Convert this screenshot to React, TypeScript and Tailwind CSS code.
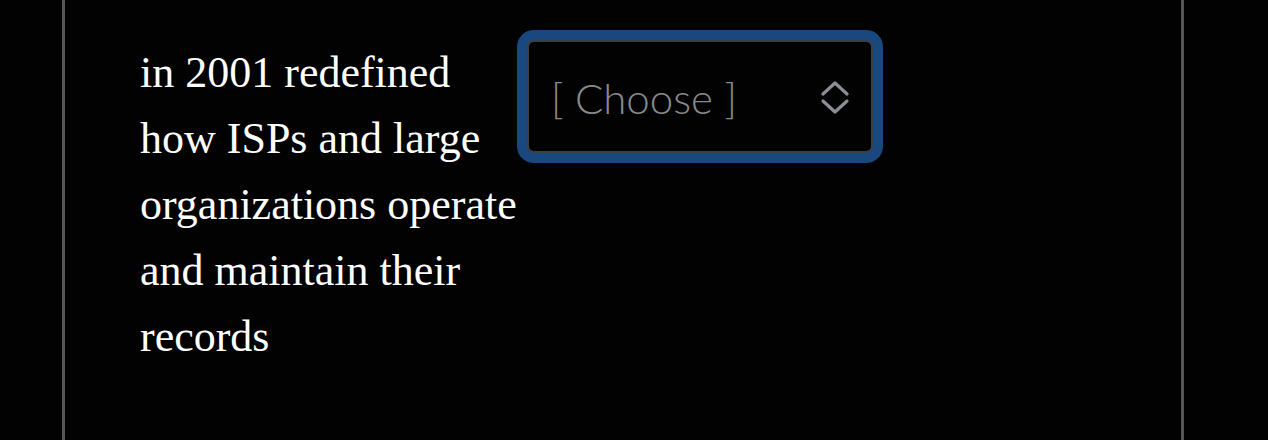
import { useState } from "react";

const options = ["[ Choose ]", "Registrar", "Registry", "Reseller"];

function ChevronsIcon() {
  return (
    <svg width="30" height="34" viewBox="0 0 30 34" fill="none" stroke="#8b8f95" strokeWidth="3.2" strokeLinecap="round" strokeLinejoin="round">
      <path d="M3 13 L15 2 L27 13" />
      <path d="M3 20 L15 31 L27 20" />
    </svg>
  );
}

export default function App() {
  const [value, setValue] = useState(options[0]);

  return (
    <div className="min-h-[440px] bg-[#020202] flex">
      <div className="ml-[62px] w-[1122px] border-x-[3px] border-[#555] min-h-[440px] pl-[75px] pt-[40px]">
        <div className="flex items-start gap-[7px]">
          <p className="w-[380px] text-white text-[44px] leading-[66px] font-['Liberation_Serif',serif]">
            in 2001 redefined how ISPs and large organizations operate and maintain their records
          </p>

          <label className="relative block w-[346px] h-[113px] rounded-[7px] border-2 border-[#3b3e43] bg-[#020202] shadow-[0_0_0_10px_#19487e]">
            <select
              className="appearance-none w-full h-full bg-transparent pl-[22px] pr-[60px] pt-[4px] text-[42px] font-light text-[#8a8a8a] outline-none font-['Lato',sans-serif]"
              value={value}
              onChange={(e) => setValue(e.target.value)}
            >
              {options.map((o) => (
                <option key={o} value={o} className="bg-black">
                  {o}
                </option>
              ))}
            </select>
            <span className="pointer-events-none absolute right-[21px] top-[39px]">
              <ChevronsIcon />
            </span>
          </label>
        </div>
      </div>
    </div>
  );
}
